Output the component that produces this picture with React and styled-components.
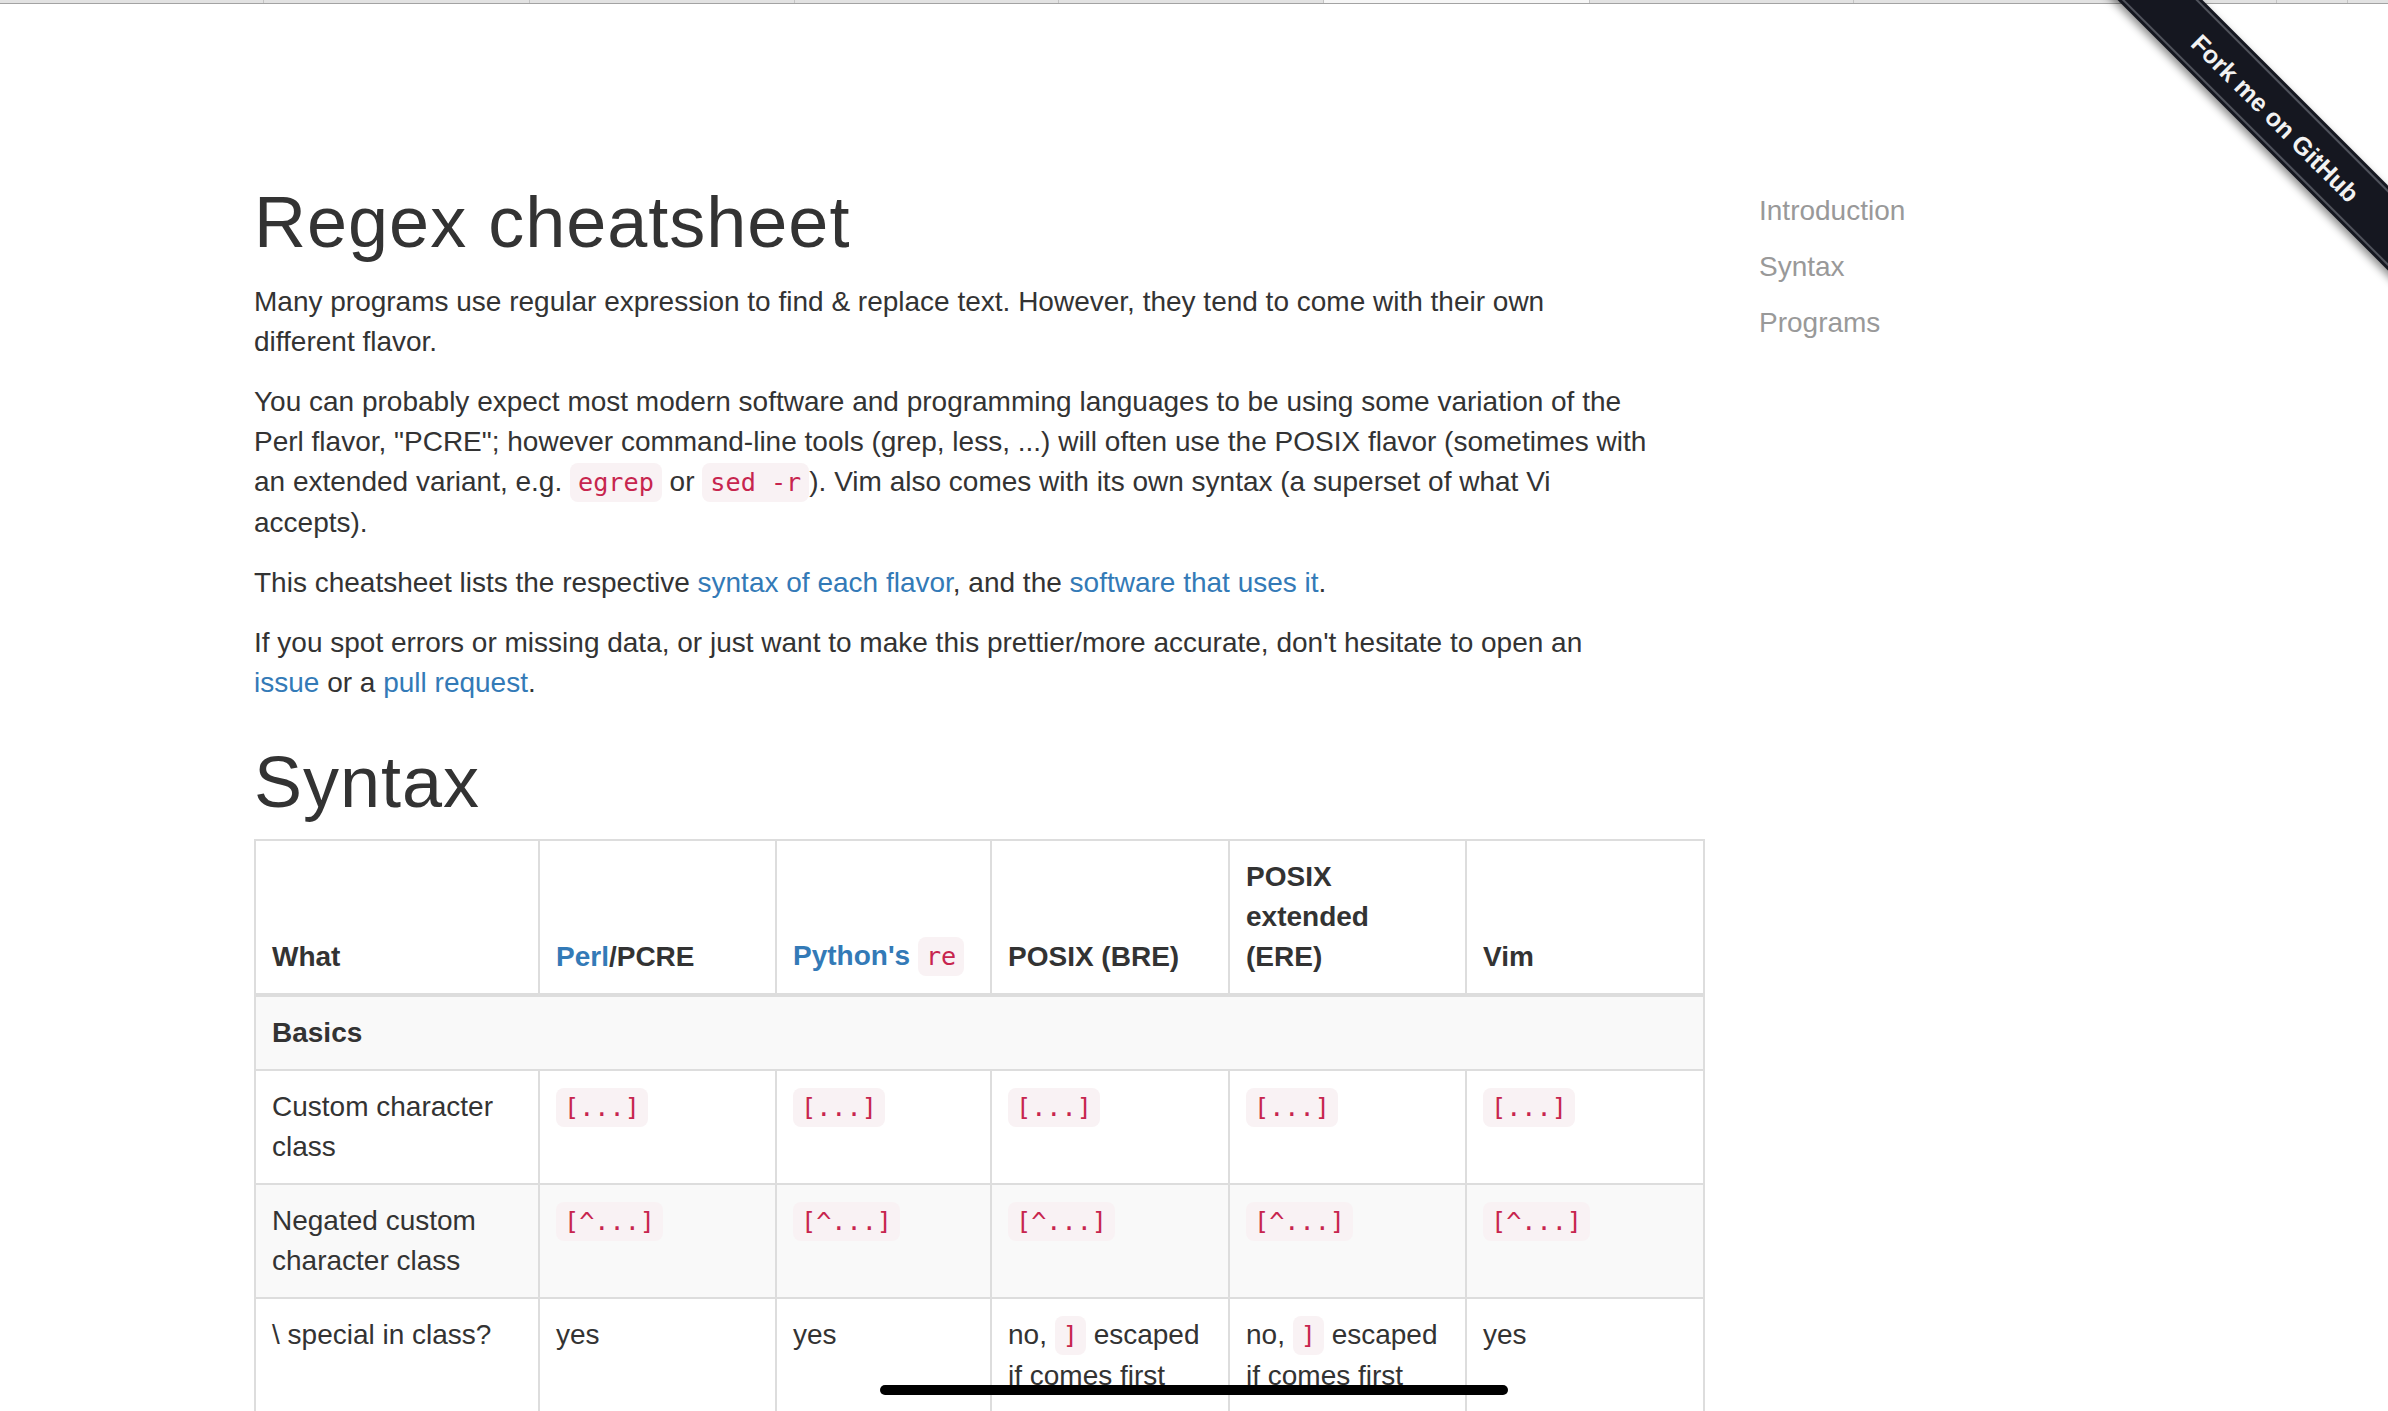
import React from 'react'
import styled, { createGlobalStyle } from 'styled-components'

const GlobalStyle = createGlobalStyle`
  html, body {
    margin: 0;
    padding: 0;
    background: #fff;
  }
  body {
    font-family: "Liberation Sans", Arial, Helvetica, sans-serif;
    font-size: 28px;
    line-height: 40px;
    color: #333;
    overflow: hidden;
  }
`

const TabStrip = styled.div`
  display: flex;
  height: 3px;
  border-bottom: 1px solid #a3a3a3;
  background: #e2e2e2;
`

const Tab = styled.div`
  width: ${p => p.w}px;
  flex: none;
  background: ${p => (p.active ? '#f6f6f6' : '#e2e2e2')};
  border-right: 1px solid #c4c4c4;
`

const Page = styled.div`
  width: 1940px;
  margin: 0 auto;
  padding: 139px 30px 0;
  box-sizing: border-box;
  display: grid;
  grid-template-columns: 1395px 1fr;
  column-gap: 110px;
`

const Main = styled.main`
  min-width: 0;
`

const Title = styled.h1`
  font-size: 72px;
  line-height: 79px;
  font-weight: 500;
  letter-spacing: 1px;
  margin: 40px 0 ${p => p.$mb ?? 20}px;
`

const Para = styled.p`
  margin: 0 0 20px;
`

const Link = styled.a`
  color: #337ab7;
  text-decoration: none;
`

const Code = styled.code`
  font-family: "DejaVu Sans Mono", Menlo, monospace;
  font-size: 25.2px;
  font-weight: normal;
  padding: 5px 8px;
  color: #c7254e;
  background: #f9f2f4;
  border-radius: 8px;
`

const SideNav = styled.nav`
  display: flex;
  flex-direction: column;
  margin-top: 40px;
`

const SideLink = styled.a`
  display: block;
  padding: 8px 0;
  color: #999;
  text-decoration: none;
`

const Table = styled.table`
  width: 1449px;
  table-layout: fixed;
  border-collapse: collapse;
  border: 2px solid #ddd;
`

const Th = styled.th`
  text-align: left;
  vertical-align: bottom;
  font-weight: bold;
  padding: 16px;
  border: 2px solid #ddd;
  border-bottom-width: 4px;
`

const Row = styled.tr`
  background: ${p => (p.striped ? '#f9f9f9' : '#fff')};
`

const Td = styled.td`
  vertical-align: top;
  padding: 16px;
  border: 2px solid #ddd;
  font-weight: ${p => (p.section ? 'bold' : 'normal')};
`

const RibbonBox = styled.div`
  position: absolute;
  top: 0;
  right: 0;
  width: 400px;
  height: 400px;
  overflow: hidden;
  pointer-events: none;
`

const Ribbon = styled.a`
  position: absolute;
  left: 36px;
  top: 84px;
  width: 500px;
  height: 60px;
  box-sizing: border-box;
  padding: 3px 0;
  transform: rotate(45deg);
  background: #151720;
  box-shadow: 0 4px 8px rgba(0, 0, 0, 0.45);
  text-decoration: none;
`

const RibbonInner = styled.span`
  display: flex;
  align-items: center;
  justify-content: center;
  height: 100%;
  box-sizing: border-box;
  padding: 4px 0 0 8px;
  border-top: 2px solid #50535c;
  border-bottom: 2px solid #50535c;
  color: #f2f2f2;
  font-family: "Liberation Sans", Arial, sans-serif;
  font-weight: bold;
  font-size: 25px;
  line-height: 1;
`

const HomeBar = styled.div`
  position: fixed;
  left: 50%;
  bottom: 16px;
  width: 628px;
  height: 10px;
  margin-left: -314px;
  background: #000;
  border-radius: 5px;
`

const tabs = [263, 265, 264, 263, 264, 265, 263, 265, 156, 70, 50]
const cols = [284, 237, 215, 238, 237, 238]

const rows = [
  { name: 'Custom character class', cells: Array(5).fill('[...]') },
  { name: 'Negated custom character class', cells: Array(5).fill('[^...]') },
]

function Escaped() {
  return (
    <>
      no, <Code>]</Code> escaped if comes first
    </>
  )
}

export default function App() {
  return (
    <>
      <GlobalStyle />
      <TabStrip>
        {tabs.map((w, i) => (
          <Tab key={i} w={w} active={i === 5} />
        ))}
      </TabStrip>
      <RibbonBox>
        <Ribbon href="#">
          <RibbonInner>Fork me on GitHub</RibbonInner>
        </Ribbon>
      </RibbonBox>
      <Page>
        <Main>
          <Title>Regex cheatsheet</Title>
          <Para>
            Many programs use regular expression to find &amp; replace text. However, they tend to come with their own
            different flavor.
          </Para>
          <Para>
            You can probably expect most modern software and programming languages to be using some variation of the
            Perl flavor, "PCRE"; however command-line tools (grep, less, ...) will often use the POSIX flavor (sometimes
            with an extended variant, e.g. <Code>egrep</Code> or <Code>sed -r</Code>). Vim also comes with its own
            syntax (a superset of what Vi accepts).
          </Para>
          <Para>
            This cheatsheet lists the respective <Link href="#syntax">syntax of each flavor</Link>, and the{' '}
            <Link href="#programs">software that uses it</Link>.
          </Para>
          <Para>
            If you spot errors or missing data, or just want to make this prettier/more accurate, don't hesitate to
            open an <Link href="#">issue</Link> or a <Link href="#">pull request</Link>.
          </Para>
          <Title id="syntax" $mb={17}>Syntax</Title>
          <Table>
            <colgroup>
              {cols.map((w, i) => (
                <col key={i} style={{ width: w }} />
              ))}
            </colgroup>
            <thead>
              <tr>
                <Th>What</Th>
                <Th>
                  <Link href="#">Perl</Link>/PCRE
                </Th>
                <Th>
                  <Link href="#">Python's</Link> <Code>re</Code>
                </Th>
                <Th>POSIX (BRE)</Th>
                <Th>POSIX extended (ERE)</Th>
                <Th>Vim</Th>
              </tr>
            </thead>
            <tbody>
              <Row striped>
                <Td section colSpan={6}>Basics</Td>
              </Row>
              {rows.map((r, i) => (
                <Row key={r.name} striped={i % 2 === 1}>
                  <Td>{r.name}</Td>
                  {r.cells.map((c, j) => (
                    <Td key={j}>
                      <Code>{c}</Code>
                    </Td>
                  ))}
                </Row>
              ))}
              <Row>
                <Td>\ special in class?</Td>
                <Td>yes</Td>
                <Td>yes</Td>
                <Td>
                  <Escaped />
                </Td>
                <Td>
                  <Escaped />
                </Td>
                <Td>yes</Td>
              </Row>
            </tbody>
          </Table>
        </Main>
        <SideNav>
          <SideLink href="#">Introduction</SideLink>
          <SideLink href="#syntax">Syntax</SideLink>
          <SideLink href="#programs">Programs</SideLink>
        </SideNav>
      </Page>
      <HomeBar />
    </>
  )
}
